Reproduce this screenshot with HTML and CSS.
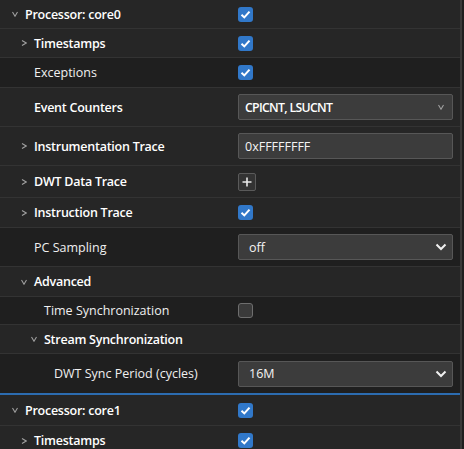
FILE: index.html
```html
<!DOCTYPE html>
<html>
<head>
<meta charset="utf-8">
<link rel="stylesheet" href="styles.css">
</head>
<body>
<div class="panel">
  <div class="row light h29">
    <div class="label l0"><span class="chev"><svg width="6" height="6" viewBox="0 0 6 6"><polyline points="0.5,1 3,5.2 5.5,1"/></svg></span><span class="t b">Processor: core0</span></div>
    <div class="ctl"><span class="cb on"><svg width="15" height="15" viewBox="0 0 15 15"><polyline points="3.5,7.8 6.3,10.4 11.5,4.6"/></svg></span></div>
  </div>
  <div class="row light h29">
    <div class="label l1"><span class="chev"><svg width="6" height="6" viewBox="0 0 6 6"><polyline points="1,0.5 5.2,3 1,5.5"/></svg></span><span class="t b">Timestamps</span></div>
    <div class="ctl"><span class="cb on"><svg width="15" height="15" viewBox="0 0 15 15"><polyline points="3.5,7.8 6.3,10.4 11.5,4.6"/></svg></span></div>
  </div>
  <div class="row dark h30">
    <div class="label l1"><span class="chev"></span><span class="t">Exceptions</span></div>
    <div class="ctl"><span class="cb on"><svg width="15" height="15" viewBox="0 0 15 15"><polyline points="3.5,7.8 6.3,10.4 11.5,4.6"/></svg></span></div>
  </div>
  <div class="row light h39">
    <div class="label l1"><span class="chev"></span><span class="t b">Event Counters</span></div>
    <div class="ctl"><div class="field multi"><span class="b caps">CPICNT, LSUCNT</span><svg class="smallv" width="6" height="6" viewBox="0 0 6 6"><polyline points="0.5,1 3,5.2 5.5,1"/></svg></div></div>
  </div>
  <div class="row light h39">
    <div class="label l1"><span class="chev"><svg width="6" height="6" viewBox="0 0 6 6"><polyline points="1,0.5 5.2,3 1,5.5"/></svg></span><span class="t b">Instrumentation Trace</span></div>
    <div class="ctl"><div class="field">0xFFFFFFFF</div></div>
  </div>
  <div class="row light h32">
    <div class="label l1"><span class="chev"><svg width="6" height="6" viewBox="0 0 6 6"><polyline points="1,0.5 5.2,3 1,5.5"/></svg></span><span class="t b">DWT Data Trace</span></div>
    <div class="ctl"><span class="plus"><svg width="18" height="18" viewBox="0 0 18 18"><path d="M9 4.5v9M4.5 9h9"/></svg></span></div>
  </div>
  <div class="row light h30">
    <div class="label l1"><span class="chev"><svg width="6" height="6" viewBox="0 0 6 6"><polyline points="1,0.5 5.2,3 1,5.5"/></svg></span><span class="t b">Instruction Trace</span></div>
    <div class="ctl"><span class="cb on"><svg width="15" height="15" viewBox="0 0 15 15"><polyline points="3.5,7.8 6.3,10.4 11.5,4.6"/></svg></span></div>
  </div>
  <div class="row dark h39">
    <div class="label l1"><span class="chev"></span><span class="t">PC Sampling</span></div>
    <div class="ctl"><div class="field sel"><span>off</span><svg class="arrow" width="12" height="8" viewBox="0 0 12 8"><polyline points="1.5,1.5 6,6 10.5,1.5"/></svg></div></div>
  </div>
  <div class="row light h30">
    <div class="label l1"><span class="chev"><svg width="6" height="6" viewBox="0 0 6 6"><polyline points="0.5,1 3,5.2 5.5,1"/></svg></span><span class="t b">Advanced</span></div>
    <div class="ctl"></div>
  </div>
  <div class="row dark h28">
    <div class="label l2"><span class="chev"></span><span class="t">Time Synchronization</span></div>
    <div class="ctl"><span class="cb off"></span></div>
  </div>
  <div class="row light h29">
    <div class="label l2"><span class="chev"><svg width="6" height="6" viewBox="0 0 6 6"><polyline points="0.5,1 3,5.2 5.5,1"/></svg></span><span class="t b">Stream Synchronization</span></div>
    <div class="ctl"></div>
  </div>
  <div class="row dark h41 focus">
    <div class="label l3"><span class="chev"></span><span class="t">DWT Sync Period (cycles)</span></div>
    <div class="ctl"><div class="field sel"><span>16M</span><svg class="arrow" width="12" height="8" viewBox="0 0 12 8"><polyline points="1.5,1.5 6,6 10.5,1.5"/></svg></div></div>
  </div>
  <div class="row light h31">
    <div class="label l0"><span class="chev"><svg width="6" height="6" viewBox="0 0 6 6"><polyline points="0.5,1 3,5.2 5.5,1"/></svg></span><span class="t b">Processor: core1</span></div>
    <div class="ctl"><span class="cb on"><svg width="15" height="15" viewBox="0 0 15 15"><polyline points="3.5,7.8 6.3,10.4 11.5,4.6"/></svg></span></div>
  </div>
  <div class="row light h30">
    <div class="label l1"><span class="chev"><svg width="6" height="6" viewBox="0 0 6 6"><polyline points="1,0.5 5.2,3 1,5.5"/></svg></span><span class="t b">Timestamps</span></div>
    <div class="ctl"><span class="cb on"><svg width="15" height="15" viewBox="0 0 15 15"><polyline points="3.5,7.8 6.3,10.4 11.5,4.6"/></svg></span></div>
  </div>
</div>
</body>
</html>
```
FILE: styles.css
```css
html, body {
  margin: 0;
  padding: 0;
  background: #1f1f1f;
  height: 100%;
  overflow: hidden;
}
body {
  font-family: "Open Sans", "Noto Sans", sans-serif;
  font-size: 12.5px;
  color: #f2f2f2;
}
.panel {
  width: 460px;
  border-right: 2px solid #393939;
  box-sizing: content-box;
  min-height: 100%;
}
.row {
  display: grid;
  grid-template-columns: 238px 1fr;
  align-items: center;
  box-sizing: border-box;
  border-bottom: 1px solid #333333;
  padding-right: 7px;
}
.row.light { background: #262626; }
.row.dark { background: #1f1f1f; }
.h28 { height: 28px; }
.h29 { height: 29px; }
.h30 { height: 30px; }
.h31 { height: 31px; }
.h32 { height: 32px; }
.h39 { height: 39px; }
.h41 { height: 41px; }
.row.focus { border-bottom: 2px solid #2c6cb0; }
.label {
  display: flex;
  align-items: center;
  white-space: nowrap;
}
.l0 { padding-left: 12px; }
.l1 { padding-left: 21px; }
.l2 { padding-left: 31px; }
.l3 { padding-left: 41px; }
.chev {
  width: 13px;
  flex: none;
  display: flex;
  align-items: center;
}
.chev svg polyline, .smallv polyline {
  fill: none;
  stroke: #a0a0a0;
  stroke-width: 1.1;
}
.t { color: #f0f0f0; }
.b { font-weight: 600; color: #ffffff; letter-spacing: -0.25px; }
.caps { letter-spacing: -0.7px; font-size: 12.3px; }
.ctl {
  display: flex;
  align-items: center;
}
.cb {
  width: 15px;
  height: 15px;
  border-radius: 3px;
  box-sizing: border-box;
  display: block;
}
.cb.on { background: #3178c9; }
.cb.on svg { display: block; }
.cb.on polyline {
  fill: none;
  stroke: #ffffff;
  stroke-width: 2;
}
.cb.off {
  background: #3a3a3a;
  border: 1px solid #6e6e6e;
}
.field {
  width: 100%;
  height: 26px;
  box-sizing: border-box;
  background: #3c3c3c;
  border: 1px solid #575757;
  border-radius: 2px;
  padding: 0 6px;
  display: flex;
  align-items: center;
  color: #f4f4f4;
}
.field.multi, .field.sel { justify-content: space-between; }
.field.multi { padding-right: 8px; }
.field.sel { padding-left: 10px; padding-right: 5px; }
.arrow polyline {
  fill: none;
  stroke: #f0f0f0;
  stroke-width: 2;
}
.plus {
  width: 18px;
  height: 18px;
  box-sizing: border-box;
  border: 1px solid #5a5a5a;
  background: #333333;
  border-radius: 2px;
  display: block;
}
.plus svg { display: block; margin: -1px; }
.plus path {
  stroke: #e8e8e8;
  stroke-width: 1.6;
}
```
